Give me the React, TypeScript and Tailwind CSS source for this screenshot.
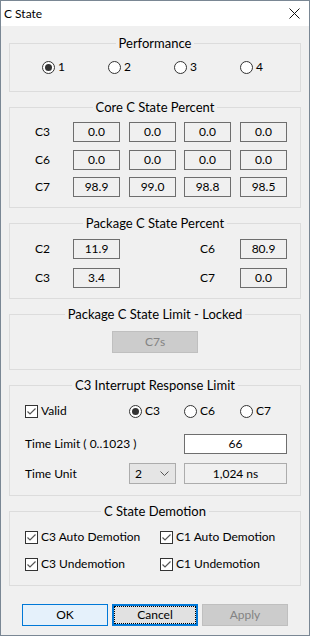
import React from 'react'

const ui = "font-['Lato','Noto_Sans',sans-serif] text-[12px] text-black"

function Radio({ checked, label }: { checked?: boolean; label: string }) {
  return (
    <span className="flex items-center h-[16px]">
      <span className="w-[13px] h-[13px] rounded-full border border-[#333] bg-white flex items-center justify-center">
        {checked && <span className="w-[7px] h-[7px] rounded-full bg-[#333]" />}
      </span>
      <span className="ml-[3px] leading-[16px]">{label}</span>
    </span>
  )
}

function Check({ label }: { label: string }) {
  return (
    <span className="flex items-center h-[16px]">
      <span className="w-[13px] h-[13px] border border-[#333] bg-white flex items-center justify-center">
        <svg width="11" height="11" viewBox="0 0 11 11">
          <path d="M1.5 5.5 L4 8 L9.5 2.5" fill="none" stroke="#555" strokeWidth="1.2" />
        </svg>
      </span>
      <span className="ml-[3px] leading-[16px]">{label}</span>
    </span>
  )
}

function Val({ v, w = 'w-[47px]', white }: { v: string; w?: string; white?: boolean }) {
  return (
    <div className={`${w} h-[20px] border border-[#6e6e6e] flex items-center justify-center ${white ? 'bg-white' : ''}`}>
      {v}
    </div>
  )
}

function Group({ title, h, children }: { title: string; h: string; children: React.ReactNode }) {
  return (
    <fieldset className={`${h} border border-[#dcdcdc]`}>
      <legend className="mx-auto px-[3px] text-[13px] leading-[16px]">{title}</legend>
      {children}
    </fieldset>
  )
}

const core = [
  ['C3', '0.0', '0.0', '0.0', '0.0'],
  ['C6', '0.0', '0.0', '0.0', '0.0'],
  ['C7', '98.9', '99.0', '98.8', '98.5'],
]

export default function App() {
  return (
    <div className={`${ui} w-[310px] h-[636px] border border-[#7a8794] bg-[#f0f0f0] flex flex-col`}>
      {/* title bar */}
      <div className="h-[25px] bg-white flex items-center justify-between pl-[3px] pr-[9px]">
        <span className="leading-[16px]">C State</span>
        <svg width="11" height="11" viewBox="0 0 11 11">
          <path d="M0.5 0.5 L10.5 10.5 M10.5 0.5 L0.5 10.5" stroke="#111" strokeWidth="1" />
        </svg>
      </div>

      <div className="flex flex-col px-[8px] pt-[9px] gap-[7px]">
        <Group title="Performance" h="h-[57px]">
          <div className="grid grid-cols-[66px_66px_66px_1fr] pl-[32px] mt-[8px]">
            <Radio checked label="1" />
            <Radio label="2" />
            <Radio label="3" />
            <Radio label="4" />
          </div>
        </Group>

        <Group title="Core C State Percent" h="h-[109px]">
          <div className="flex flex-col mt-[7px] gap-[7.5px]">
            {core.map((r) => (
              <div key={r[0]} className="grid grid-cols-[63px_56px_55px_56px_1fr] items-center">
                <span className="pl-[25px]">{r[0]}</span>
                <Val v={r[1]} />
                <Val v={r[2]} />
                <Val v={r[3]} />
                <Val v={r[4]} />
              </div>
            ))}
          </div>
        </Group>

        <Group title="Package C State Percent" h="h-[84px]">
          <div className="flex flex-col mt-[8px] gap-[9px]">
            <div className="grid grid-cols-[63px_127px_40px_1fr] items-center">
              <span className="pl-[25px]">C2</span>
              <Val v="11.9" />
              <span>C6</span>
              <Val v="80.9" />
            </div>
            <div className="grid grid-cols-[63px_127px_40px_1fr] items-center">
              <span className="pl-[25px]">C3</span>
              <Val v="3.4" />
              <span>C7</span>
              <Val v="0.0" />
            </div>
          </div>
        </Group>

        <Group title="Package C State Limit - Locked" h="h-[64px]">
          <div className="mx-auto mt-[9px] w-[86px] h-[22px] bg-[#cccccc] border border-[#bfbfbf] text-[#838383] flex items-center justify-center">
            C7s
          </div>
        </Group>

        <Group title="C3 Interrupt Response Limit" h="h-[119px]">
          <div className="grid grid-cols-[119px_55px_56px_1fr] mt-[10px]">
            <span className="pl-[15px]">
              <Check label="Valid" />
            </span>
            <Radio checked label="C3" />
            <Radio label="C6" />
            <Radio label="C7" />
          </div>
          <div className="grid grid-cols-[174px_103px] items-center mt-[15px]">
            <span className="pl-[15px]">Time Limit ( 0..1023 )</span>
            <Val v="66" w="w-[103px]" white />
          </div>
          <div className="grid grid-cols-[119px_55px_103px] items-center mt-[9px]">
            <span className="pl-[15px]">Time Unit</span>
            <div className="w-[47px] h-[21px] bg-[#e5e5e5] border border-[#acacac] flex items-center justify-between pl-[5px] pr-[6px]">
              <span>2</span>
              <svg width="9" height="5" viewBox="0 0 9 5">
                <path d="M0.5 0.5 L4.5 4.5 L8.5 0.5" fill="none" stroke="#555" strokeWidth="1" />
              </svg>
            </div>
            <div className="w-[103px] h-[21px] border border-[#acacac] flex items-center justify-center">1,024 ns</div>
          </div>
        </Group>

        <Group title="C State Demotion" h="h-[83px]">
          <div className="grid grid-cols-[135px_1fr] pl-[15px] mt-[10px] gap-y-[11px]">
            <Check label="C3 Auto Demotion" />
            <Check label="C1 Auto Demotion" />
            <Check label="C3 Undemotion" />
            <Check label="C1 Undemotion" />
          </div>
        </Group>
      </div>

      <div className="flex pl-[21px] gap-[4px] mt-[18px]">
        <div className="w-[86px] h-[22px] border border-[#0078d7] bg-[#e5f1fb] flex items-center justify-center">OK</div>
        <div className="w-[86px] h-[22px] border-2 border-[#0078d7] bg-[#e1e1e1] outline-1 outline-dotted outline-black outline-offset-[-3px] flex items-center justify-center">
          Cancel
        </div>
        <div className="w-[86px] h-[22px] border border-[#bfbfbf] bg-[#cccccc] text-[#838383] flex items-center justify-center">Apply</div>
      </div>
    </div>
  )
}
